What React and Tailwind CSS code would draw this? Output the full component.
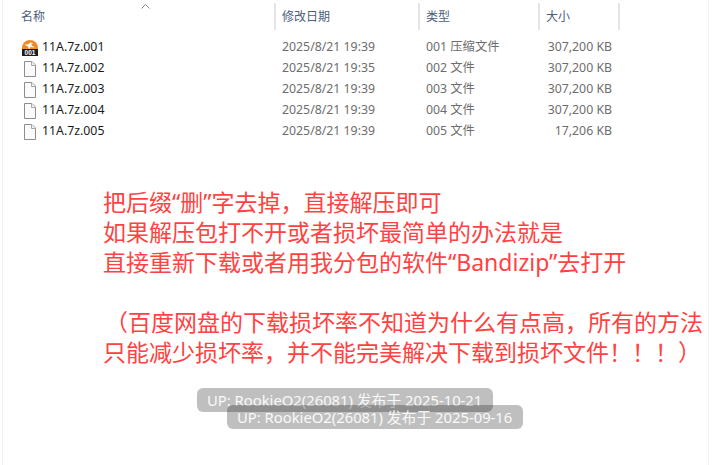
import React from "react";

const files = [
  { name: "11A.7z.001", date: "2025/8/21 19:39", type: "001 压缩文件", size: "307,200 KB", archive: true },
  { name: "11A.7z.002", date: "2025/8/21 19:35", type: "002 文件", size: "307,200 KB" },
  { name: "11A.7z.003", date: "2025/8/21 19:39", type: "003 文件", size: "307,200 KB" },
  { name: "11A.7z.004", date: "2025/8/21 19:39", type: "004 文件", size: "307,200 KB" },
  { name: "11A.7z.005", date: "2025/8/21 19:39", type: "005 文件", size: "17,206 KB" },
];

const notes = [
  "把后缀“删”字去掉，直接解压即可",
  "如果解压包打不开或者损坏最简单的办法就是",
  "直接重新下载或者用我分包的软件“Bandizip”去打开",
];

function FileIcon() {
  return (
    <svg width="16" height="16" viewBox="0 0 16 16" className="shrink-0">
      <path d="M2.5 .5H10L13.5 4V15.5H2.5Z" fill="#fbfbfc" stroke="#8d8d8d" />
      <path d="M9.5 .5V4.500H13.500" fill="#f0f0f0" stroke="#a8a8a8" />
    </svg>
  );
}

function ArchiveIcon() {
  return (
    <svg width="16" height="16" viewBox="0 0 16 16" className="shrink-0">
      <path d="M0 10V8A8 8 0 0 1 16 8V10Z" fill="#f08a24" />
      <path d="M9.500 1.500L6 4.500H2.500L6 6.500L7 9.500L8.500 7L13 7.500L9 5L11 3H8.500Z" fill="#fff" />
      <rect x="0" y="9" width="16" height="7" fill="#1c1c1c" />
      <text x="8" y="15" textAnchor="middle" fontSize="6.500" fontWeight="700" fill="#fff" fontFamily="Liberation Sans, sans-serif">001</text>
    </svg>
  );
}

function HeaderCell({ label, className }) {
  return (
    <div className={`flex h-[27px] items-center border-r-2 border-[#e5e5e5] pt-px text-[12px] text-[#4c607a] ${className}`}>
      {label}
    </div>
  );
}

function Toast({ text, className }) {
  return (
    <div className={`absolute flex h-6 w-[296px] items-center rounded-md bg-black/25 pl-2.5 text-[14.800px] whitespace-nowrap text-white/90 ${className}`}>
      {text}
    </div>
  );
}

export default function App() {
  return (
    <div className="relative h-[465px] w-[716px] overflow-hidden bg-white font-['Noto_Sans','Noto_Sans_CJK_SC',sans-serif]">
      <div className="mx-0.5 h-full w-[707px] border-x border-[#f2f2f2]">
        {/* header */}
        <div className="relative flex pt-[3px] pl-[18px]">
          <HeaderCell label="名称" className="w-[255px]" />
          <HeaderCell label="修改日期" className="w-[144px] pl-1.5" />
          <HeaderCell label="类型" className="w-[120px] pl-1.5" />
          <HeaderCell label="大小" className="w-[80px] pl-1.5" />
          <svg width="10" height="5" viewBox="0 0 10 5" className="absolute top-1 left-[138px]">
            <path d="M.5 4.500L4.500 .5L8.500 4.500" fill="none" stroke="#8a8a8a" />
          </svg>
        </div>

        {/* file rows */}
        <div className="mt-[7px] pl-[19px] text-[12.300px]">
          {files.map((file) => (
            <div key={file.name} className="flex h-[21px] items-center">
              <div className="flex w-[260px] items-center gap-1 text-[#1a1a1a]">
                {file.archive ? <ArchiveIcon /> : <FileIcon />}
                <span>{file.name}</span>
              </div>
              <div className="w-[144px] text-[#6d6d6d]">{file.date}</div>
              <div className="w-[118px] text-[#6d6d6d]">{file.type}</div>
              <div className="w-[68px] text-right text-[#6d6d6d]">{file.size}</div>
            </div>
          ))}
        </div>

        {/* red note */}
        <div className="mt-[45px] pl-[100px] text-[23px] leading-[30px] whitespace-nowrap text-[#ff4242]">
          {notes.map((line) => (
            <div key={line}>{line}</div>
          ))}
          <div className="mt-[30px]">
            <div className="pl-[2px]">（百度网盘的下载损坏率不知道为什么有点高，所有的方法</div>
            <div>只能减少损坏率，并不能完美解决下载到损坏文件！！！）</div>
          </div>
        </div>
      </div>

      <Toast text="UP: RookieO2(26081) 发布于 2025-10-21" className="top-[388px] left-[197px]" />
      <Toast text="UP: RookieO2(26081) 发布于 2025-09-16" className="top-[405px] left-[227px]" />
    </div>
  );
}
